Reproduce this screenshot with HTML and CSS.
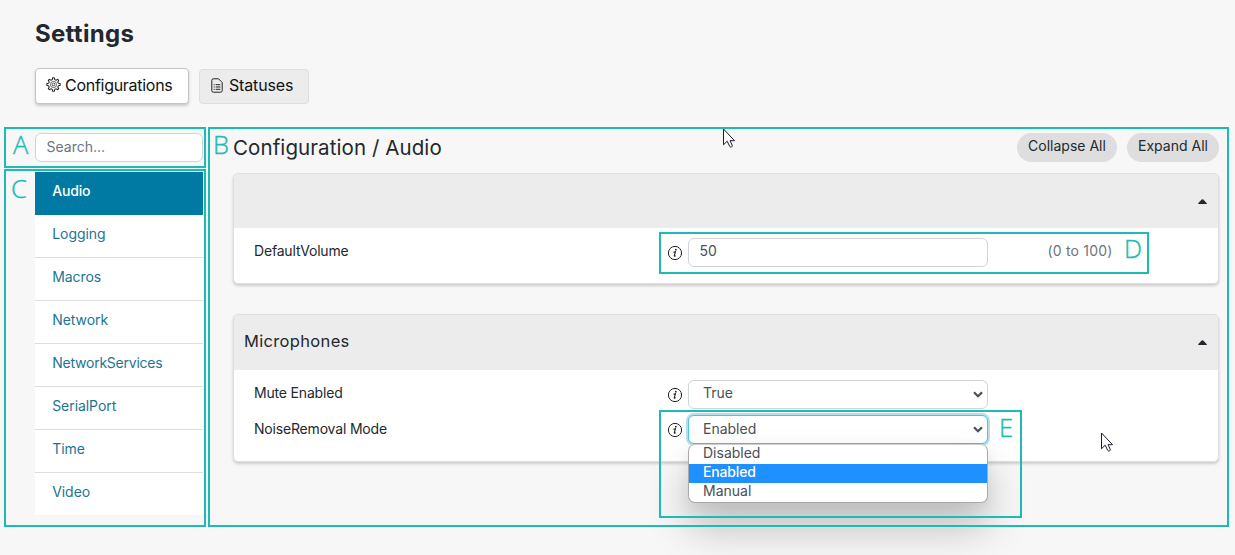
FILE: index.html
```html
<!DOCTYPE html>
<html lang="en">
<head>
<meta charset="utf-8">
<title>Settings</title>
<link rel="stylesheet" href="styles.css">
</head>
<body>
<svg class="defs" width="0" height="0" aria-hidden="true">
  <symbol id="info" viewBox="0 0 16 16"><circle cx="8" cy="8" r="6.600" fill="none" stroke="currentColor" stroke-width="1"/><circle cx="8.800" cy="4.700" r="0.900"/><path d="M6.500 7.100q1.100 0 1.900-.4l-1.100 4.100c-.1.600.500.500 1.400-.2" fill="none" stroke="currentColor" stroke-width="1.100"/></symbol>
  <symbol id="up" viewBox="0 0 9 5"><path d="M.8 5Q-.2 5 .4 4.100L3.700.600Q4.500-.1 5.300.600L8.600 4.100Q9.200 5 8.200 5Z"/></symbol>
  <symbol id="down" viewBox="0 0 10 7"><path d="M1 1.200l4 4 4-4" fill="none" stroke="currentColor" stroke-width="2.200"/></symbol>
  <symbol id="pointer" viewBox="0 0 14 20"><path d="M1.500 1v15.800l3.700-3.600 2.500 5.200q.7 1.100 1.900.5 1-.6.600-1.700l-2.200-4.500h4.500z" fill="#fff" stroke="#1b1b2b" stroke-width="1"/></symbol>
</svg>
<header class="top">
  <h1 class="title">Settings</h1>
  <nav class="tabs">
    <button class="tab tab-active"><svg class="gear" viewBox="0 0 16 16"><path d="M6.600 2.800 7.200.900h1.600l.6 1.900 1.300.6 1.800-.9L13.500 3.500l-.9 1.800.6 1.300 1.900.6v1.600l-1.900.6-.6 1.300.9 1.800-1 1-1.800-.9-1.300.6-.6 1.900H7.200l-.6-1.900-1.300-.6-1.800.9-1-1 .9-1.800-.6-1.300-1.900-.6V7.200l1.900-.6.6-1.300-.9-1.800 1-1 1.800.9z"/><circle cx="8" cy="8" r="3.300" stroke-width=".7"/><circle cx="8" cy="8" r="1.500" stroke-width=".8"/></svg><span class="t-conf">Configurations</span></button>
    <button class="tab"><svg class="doc" viewBox="0 0 12 15"><path d="M2.300.8h5.200L11.200 4.500v8.200q0 1.500-1.500 1.500H2.300Q.8 14.200.8 12.700V2.300Q.8.800 2.300.800z"/><path d="M2.700 6.700h1M4.700 6.700h4.600M2.700 9h1M4.700 9h4.600M2.700 11.300h1M4.700 11.300h4.600"/></svg><span class="t-stat">Statuses</span></button>
  </nav>
</header>
<div class="layout">
  <aside class="side">
    <input class="search" type="text" placeholder="Search...">
    <ul class="menu">
      <li class="item item-active">Audio</li><li class="item">Logging</li><li class="item">Macros</li><li class="item">Network</li><li class="item item-services">NetworkServices</li><li class="item">SerialPort</li><li class="item">Time</li><li class="item">Video</li>
    </ul>
  </aside>
  <main class="main">
    <div class="bar">
      <h2 class="heading">Configuration / Audio</h2>
      <button class="pill pill-collapse">Collapse All</button>
      <button class="pill pill-expand">Expand All</button>
    </div>
    <section class="card">
      <div class="card-head"><span></span><svg class="up"><use href="#up"/></svg></div>
      <div class="card-body">
        <div class="row"><label class="label">DefaultVolume</label><svg class="info"><use href="#info"/></svg><div class="field field-input">50</div><span class="range">(0 to 100)</span></div>
      </div>
    </section>
    <section class="card card-mic">
      <div class="card-head"><span class="mic">Microphones</span><svg class="up"><use href="#up"/></svg></div>
      <div class="card-body">
        <div class="row"><label class="label">Mute Enabled</label><svg class="info"><use href="#info"/></svg><div class="field"><span>True</span><svg class="down"><use href="#down"/></svg></div></div>
        <div class="row row-noise"><label class="label">NoiseRemoval Mode</label><svg class="info"><use href="#info"/></svg><div class="field field-focus"><span>Enabled</span><svg class="down"><use href="#down"/></svg>
          <ul class="options"><li class="option">Disabled</li><li class="option option-on">Enabled</li><li class="option">Manual</li></ul></div></div>
      </div>
    </section>
  </main>
</div>
<div class="note note-a"><span class="letter">A</span></div>
<div class="note note-c"><span class="letter">C</span></div>
<div class="note note-b"><span class="letter">B</span></div>
<div class="note note-d"><span class="letter">D</span></div>
<div class="note note-e"><span class="letter">E</span></div>
<svg class="pointer pointer-top"><use href="#pointer"/></svg>
<svg class="pointer pointer-card"><use href="#pointer"/></svg>
</body>
</html>
```
FILE: styles.css
```css
* { box-sizing: border-box; }
body { margin: 0; width: 1235px; height: 555px; overflow: hidden; position: relative; background: #f7f7f7; color: #23282e; font: 14px/20px Inter, "Liberation Sans", sans-serif; }
button, input { font: inherit; margin: 0; }
h1, h2, ul { margin: 0; padding: 0; list-style: none; }
svg { display: block; flex: none; fill: currentColor; }
.defs { position: absolute; }
.top { padding: 19px 0 0 35px; }
.title { font-size: 24px; line-height: 30px; font-weight: 700; letter-spacing: 0.3px; }
.tabs { display: flex; align-items: center; gap: 10px; margin-top: 19px; }
.tab { display: flex; align-items: center; height: 35px; width: 110px; padding: 0 0 2px 11px; border: 1px solid #dedede; border-radius: 4px; background: #ececec; color: #121212; font-size: 16px; white-space: nowrap; }
.tab-active { width: 154px; height: 36px; padding: 0 0 3px 10px; background: #fff; border-color: #c4c4c4; box-shadow: 0 2px 3px rgba(0,0,0,.18); }
.t-conf { letter-spacing: -0.28px; }
.t-stat { letter-spacing: -0.15px; }
.gear { width: 15px; height: 15px; margin-right: 4px; fill: none; stroke: #222; stroke-width: 1.1; }
.doc { width: 12px; height: 15px; margin-right: 6px; fill: none; stroke: #222; stroke-width: 1; }
.layout { display: flex; gap: 30px; padding: 29px 16px 0 35px; }
.side { width: 168px; }
.search { display: block; width: 168px; height: 29px; padding: 0 10.5px 2px; border: 1px solid #ced4da; border-radius: 6px; background: #fff; outline: none; }
.search::placeholder { color: #6c757d; opacity: 1; }
.menu { margin-top: 10px; }
.item { height: 43px; padding: 9px 17.2px; background: #fff; border-bottom: 1px solid #dedede; color: #1c7594; letter-spacing: -0.06px; }
.item-services { letter-spacing: -0.23px; }
.item:last-child { height: 42px; border-bottom: 0; }
.item-active { background: #007aa3; color: #fff; border-color: #007aa3; font-weight: 500; letter-spacing: -0.15px; }
.main { flex: 1; }
.bar { display: flex; gap: 10px; height: 29px; }
.heading { flex: 1; font-size: 20.5px; line-height: 29px; font-weight: 400; letter-spacing: 0.09px; }
.pill { height: 29px; padding: 0 0 3px; border: 0; border-radius: 15px; background: #dedede; color: #23282e; white-space: nowrap; }
.pill-collapse { width: 100px; }
.pill-expand { width: 92px; }
.card { height: 111px; margin-top: 11px; border: 1px solid #dedede; border-radius: 5px; background: #fff; box-shadow: 0 2px 3px rgba(0,0,0,.17); }
.card-mic { height: 148px; margin-top: 30px; }
.card-head { display: flex; justify-content: space-between; align-items: center; height: 54px; padding: 0 11px 0 10px; background: #ececec; border-radius: 4px 4px 0 0; font-size: 16.5px; }
.card-mic .card-head { height: 55px; }
.mic { padding-bottom: 3px; letter-spacing: 0.33px; }
.up { width: 9px; height: 5px; margin-top: 0; }
.card-body { padding: 10px 0 0 20px; }
.row { display: flex; height: 29px; }
.row-noise { margin-top: 6px; }
.label { width: 413px; line-height: 26px; letter-spacing: -0.18px; }
.row-noise .label { line-height: 28px; }
.info { width: 16px; height: 16px; margin: 7px 5px 0 0; color: #222; }
.field { position: relative; display: flex; justify-content: space-between; width: 300px; height: 29px; padding: 0 4px 0 14px; border: 1px solid #ced4da; border-radius: 6px; background: #fff; color: #495057; line-height: 24px; }
.field-input { padding-left: 10.5px; }
.field-focus { border-color: #4cc3e8; box-shadow: 0 0 0 2px #b5dfed; line-height: 26px; }
.down { width: 10px; height: 7px; margin-top: 10px; }
.range { width: 65px; margin-left: 59.5px; color: #6c757d; line-height: 26px; letter-spacing: 0.2px; white-space: nowrap; }
.options { position: absolute; left: -1px; top: 28px; width: 300px; border: 1px solid #aaa; border-top-color: #ccc; border-radius: 7px; background: #fff; box-shadow: 0 26px 40px rgba(0,0,0,.22), 0 4px 14px rgba(0,0,0,.06); }
.option { height: 19px; padding-left: 14px; line-height: 16px; }
.option-on { background: #1e90ff; color: #fff; font-weight: 500; letter-spacing: -0.15px; }
.note { position: absolute; border: 2px solid #1cbcb4; pointer-events: none; }
.letter { position: absolute; color: #1cbcb4; font: 300 25.5px/25px "Open Sans", "Noto Sans", sans-serif; -webkit-text-stroke: 0.4px #1cbcb4; }
.note-a { left: 4px; top: 127px; width: 202px; height: 41px; }
.note-a .letter { left: 7px; top: 3px; }
.note-c { left: 4px; top: 169px; width: 202px; height: 358px; }
.note-c .letter { left: 5px; top: 5px; }
.note-b { left: 208px; top: 127px; width: 1021px; height: 400px; }
.note-b .letter { left: 3px; top: 3px; }
.note-d { left: 659px; top: 232px; width: 490px; height: 42px; }
.note-d .letter { left: 463px; top: 2px; }
.note-e { left: 659px; top: 410px; width: 363px; height: 108px; }
.note-e .letter { left: 338px; top: 3px; }
.pointer { position: absolute; width: 14px; height: 20px; }
.pointer-top { left: 722px; top: 128px; }
.pointer-card { left: 1100px; top: 432px; }
```
